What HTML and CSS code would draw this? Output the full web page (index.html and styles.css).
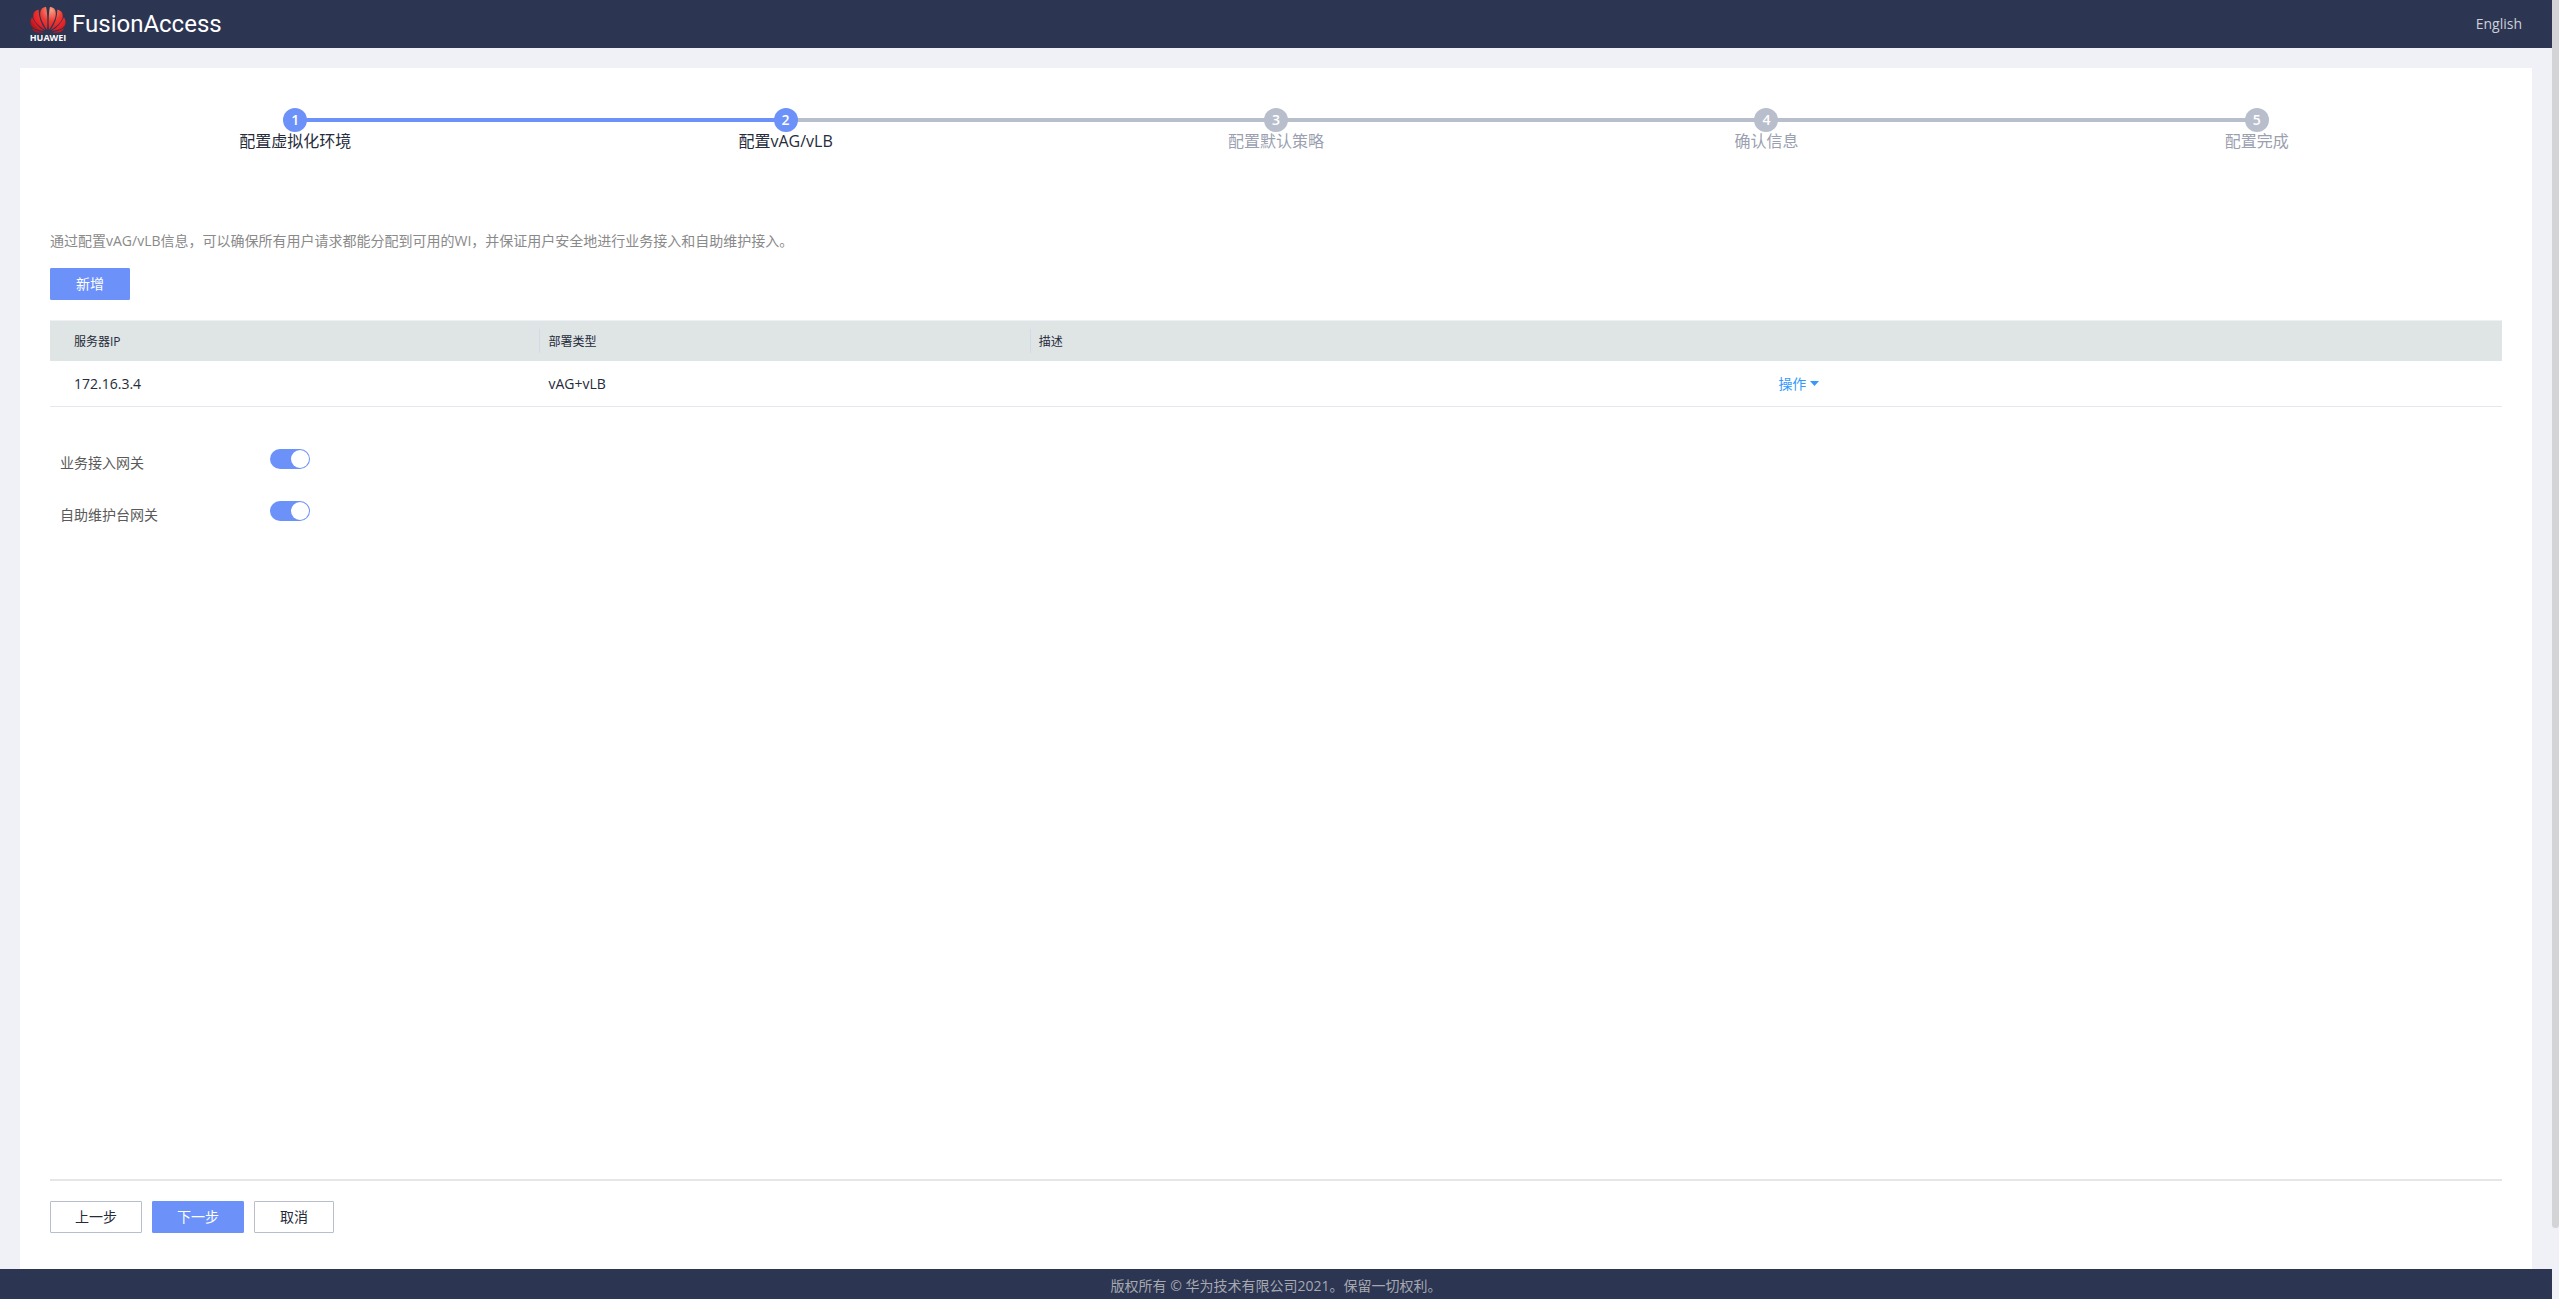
FILE: index.html
```html
<!DOCTYPE html>
<html lang="zh-CN">
<head>
<meta charset="utf-8">
<title>FusionAccess</title>
<link rel="stylesheet" href="styles.css">
</head>
<body>
<div class="page">
  <header class="topbar">
    <div class="brand">
      <svg class="brand-mark" viewBox="0 0 36 36" role="img" aria-label="HUAWEI">
        <defs>
          <radialGradient id="petal" gradientUnits="userSpaceOnUse" cx="21" cy="4" r="25">
            <stop offset="0" stop-color="#f9a284"/>
            <stop offset="0.45" stop-color="#ee3a33"/>
            <stop offset="0.8" stop-color="#e51c23"/>
            <stop offset="1" stop-color="#b01419"/>
          </radialGradient>
        </defs>
        <g fill="url(#petal)">
          <path d="M17 24C12.500 17 10 12 10.200 7C10.400 3.200 12.500 1.300 16 .8C17.200 5 17.800 17 17 24Z"/>
          <path d="M19 24C23.500 17 26 12 25.800 7C25.600 3.200 23.500 1.300 20 .8C18.800 5 18.200 17 19 24Z"/>
          <path d="M15.500 24.200C8 19.500 3.400 15 3.200 10.200C3.100 6.800 5 4.400 8.600 3.600C8.600 11 11 18 15.500 24.200Z"/>
          <path d="M20.500 24.200C28 19.500 32.600 15 32.800 10.200C32.900 6.800 31 4.400 27.400 3.600C27.400 11 25 18 20.500 24.200Z"/>
          <path d="M14.200 24.800C6 24.500 .8 21.500 .5 16.800Q.4 13.500 2 11.200C4.600 17 9 21.500 14.200 24.800Z"/>
          <path d="M21.800 24.800C30 24.500 35.200 21.500 35.500 16.800Q35.600 13.500 34 11.200C31.400 17 27 21.500 21.800 24.800Z"/>
          <path d="M14 26C11 27.300 5.500 27 3.400 24.600Q2.400 23.600 2 22.300C6 24.800 10 25.800 14 26Z"/>
          <path d="M22 26C25 27.300 30.500 27 32.600 24.600Q33.600 23.600 34 22.300C30 24.800 26 25.800 22 26Z"/>
        </g>
        <text class="brand-caption" x="18" y="35" text-anchor="middle">HUAWEI</text>
      </svg>
      <span class="brand-name">FusionAccess</span>
    </div>
    <a class="lang" href="#">English</a>
  </header>

  <main class="panel">
    <ol class="steps">
      <li class="step done"><span class="dot">1</span><span class="step-label">配置虚拟化环境</span></li>
      <li class="step current"><span class="dot">2</span><span class="step-label">配置vAG/vLB</span></li>
      <li class="step"><span class="dot">3</span><span class="step-label">配置默认策略</span></li>
      <li class="step"><span class="dot">4</span><span class="step-label">确认信息</span></li>
      <li class="step"><span class="dot">5</span><span class="step-label">配置完成</span></li>
    </ol>

    <p class="intro">通过配置vAG/vLB信息，可以确保所有用户请求都能分配到可用的WI，并保证用户安全地进行业务接入和自助维护接入。</p>
    <button class="btn primary add" type="button">新增</button>

    <table class="servers">
      <colgroup><col class="col-ip"><col class="col-type"><col class="col-desc"><col class="col-action"></colgroup>
      <thead>
        <tr><th><span class="cell">服务器IP</span></th><th><span class="cell">部署类型</span></th><th><span class="cell last">描述</span></th><th></th></tr>
      </thead>
      <tbody>
        <tr><td>172.16.3.4</td><td>vAG+vLB</td><td></td><td class="action-cell"><button class="action" type="button">操作<svg class="caret" viewBox="0 0 9 5" aria-hidden="true"><path d="M0 0H9L4.500 5Z"/></svg></button></td></tr>
      </tbody>
    </table>

    <div class="settings">
      <label class="setting"><span class="setting-name">业务接入网关</span><input class="switch" type="checkbox" checked></label>
      <label class="setting"><span class="setting-name">自助维护台网关</span><input class="switch" type="checkbox" checked></label>
    </div>

    <div class="wizard-actions">
      <button class="btn" type="button">上一步</button>
      <button class="btn primary" type="button">下一步</button>
      <button class="btn" type="button">取消</button>
    </div>
  </main>

  <footer class="copyright">版权所有 © 华为技术有限公司2021。保留一切权利。</footer>
</div>
<div class="scroll-track" aria-hidden="true"><div class="scroll-thumb"></div></div>
</body>
</html>
```
FILE: styles.css
```css
* { box-sizing: border-box; }

body {
  margin: 0;
  display: flex;
  min-height: 100vh;
  background: #f0f1f6;
  color: #252b3a;
  font: 14px/20px "Open Sans", "Noto Sans CJK SC", sans-serif;
}

button { font: inherit; cursor: pointer; }

.page {
  flex: 1;
  min-width: 0;
  display: flex;
  flex-direction: column;
}

.topbar {
  height: 48px;
  padding: 0 30px;
  display: flex;
  align-items: center;
  justify-content: space-between;
  background: #2c3552;
}

.brand { display: flex; align-items: center; gap: 6px; }
.brand-mark { width: 36px; height: 36px; overflow: visible; }
.brand-caption { font: 700 9px "Open Sans", sans-serif; fill: #fff; }
.brand-name { color: #fff; font: 24px/32px Roboto, sans-serif; }
.lang { color: #cdd0d8; text-decoration: none; }

.panel {
  flex: 1;
  margin: 20px 20px 0;
  padding: 40px 30px 36px;
  display: flex;
  flex-direction: column;
  background: #fff;
}

.steps {
  margin: 0 0 81px;
  padding: 0;
  display: flex;
  list-style: none;
}

.step {
  flex: 1;
  position: relative;
  display: flex;
  flex-direction: column;
  align-items: center;
  color: #9b9fb0;
  font-size: 16px;
}

.step-label { line-height: 18px; }

.step:not(:last-child)::after {
  content: "";
  position: absolute;
  top: 10px;
  left: 50%;
  width: 100%;
  height: 4px;
  background: #b8becc;
}

.step.done::after { background: #6c92fa; }

.dot {
  position: relative;
  z-index: 1;
  width: 24px;
  height: 24px;
  border-radius: 50%;
  background: #b8becc;
  color: #fff;
  font-size: 14px;
  font-weight: 600;
  line-height: 24px;
  text-align: center;
}

.done, .current { color: #252b3a; }
.done .dot, .current .dot { background: #6c92fa; }

.intro { margin: 0 0 17px; color: #8a8a8a; }

.btn {
  min-width: 80px;
  height: 32px;
  padding: 0 24px;
  border: 1px solid #b8becc;
  border-radius: 1px;
  background: #fff;
  color: #252b3a;
  line-height: 30px;
}

.btn.primary { border-color: #6c92fa; background: #6c92fa; color: #fff; }
.add { align-self: flex-start; margin-bottom: 20px; }

.servers {
  width: 100%;
  table-layout: fixed;
  border-collapse: separate;
  border-spacing: 0;
  border-top: 1px solid #eef0f5;
}

.col-ip, .col-type { width: 20%; }
.col-desc, .col-action { width: 30%; }

.servers th {
  height: 40px;
  padding: 0;
  background: #dfe4e4;
  font-size: 12px;
  font-weight: 400;
  text-align: left;
}

.cell {
  display: block;
  height: 24px;
  padding-left: 8px;
  border-right: 1px solid #d4d9e8;
  line-height: 26px;
}

.cell.last { border-right: 0; }
.servers td { height: 46px; padding: 0 8px; border-bottom: 1px solid #e4e7f2; }
.servers th:first-child .cell, .servers td:first-child { padding-left: 24px; }
.servers .action-cell { padding-left: 12px; }

.action {
  padding: 0;
  display: flex;
  align-items: center;
  gap: 4px;
  border: 0;
  background: none;
  color: #3399ff;
}

.caret { width: 9px; height: 5px; fill: currentColor; }

.settings {
  margin-top: 42px;
  padding-left: 10px;
  display: flex;
  flex-direction: column;
  gap: 32px;
}

.setting { display: flex; align-items: flex-start; height: 20px; color: #5a5a5a; }
.setting-name { width: 210px; padding-top: 4px; }

.switch {
  appearance: none;
  margin: 0;
  width: 40px;
  height: 20px;
  padding: 1px;
  display: flex;
  justify-content: flex-end;
  border-radius: 10px;
  background: #6c92fa;
}

.switch::before {
  content: "";
  width: 18px;
  height: 18px;
  border-radius: 50%;
  background: #fff;
}

.switch:not(:checked) { justify-content: flex-start; background: #b8becc; }

.wizard-actions {
  margin-top: auto;
  padding-top: 20px;
  display: flex;
  gap: 10px;
  border-top: 2px solid #e6e6e6;
}

.copyright {
  height: 30px;
  padding-top: 7px;
  background: #2c3552;
  color: #a6a9b0;
  text-align: center;
}

.scroll-track { width: 7px; background: #f0f1f6; }
.scroll-thumb { height: 1228px; max-height: 95%; border-radius: 0 0 4px 4px; background: #d3d4d6; }
```
